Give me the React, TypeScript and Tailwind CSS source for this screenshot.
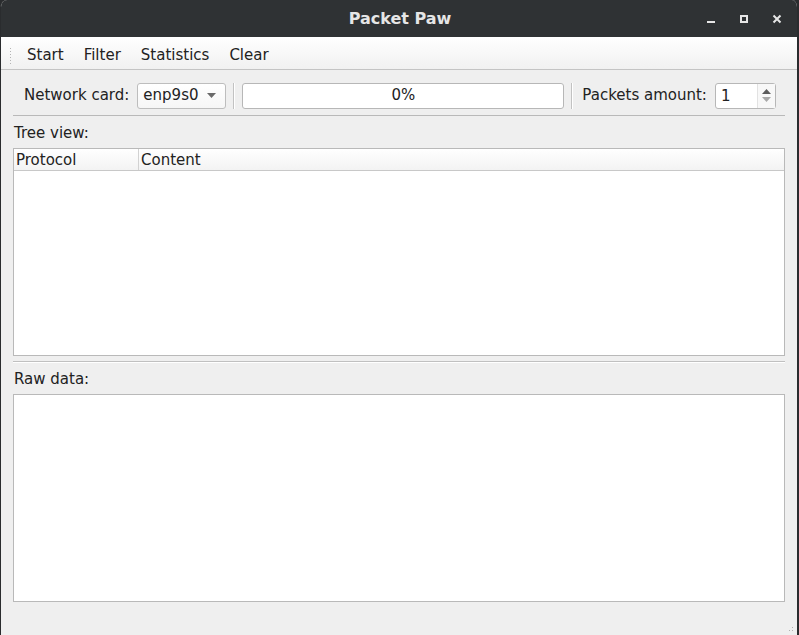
import React from "react";

const Separator = () => (
  <div className="flex shrink-0 h-[26px] mx-[7px]">
    <div className="w-px bg-[#c2c2c2]"></div>
    <div className="w-px bg-white"></div>
  </div>
);

const App = () => {
  return (
    <div className="w-[799px] h-[635px] bg-[#2a2c2e] font-['DejaVu_Sans',sans-serif] text-[15px] text-[#222]">
      <div className="w-full h-full flex flex-col bg-[#efefef] border-l border-r-2 border-[#2a2c2e] rounded-t-[7px] overflow-hidden">
        {/* title bar */}
        <div className="relative h-[37px] flex items-center justify-center bg-[#2f3234] shrink-0">
          <span className="font-bold text-[#e6e6e6] text-[16px] ml-[2px]">Packet Paw</span>
          <div className="absolute right-0 top-0 h-full flex items-center">
            <div className="w-[33px] flex justify-center pt-[6px]">
              <div className="w-[8px] h-[2px] bg-[#e6e6e6]"></div>
            </div>
            <div className="w-[33px] flex justify-center">
              <div className="w-[8px] h-[8px] border-2 border-[#e6e6e6]"></div>
            </div>
            <div className="w-[33px] flex justify-center mr-[4px]">
              <svg width="10" height="10" viewBox="0 0 10 10">
                <path d="M1.5 1.5 L8.5 8.5 M8.5 1.5 L1.5 8.5" stroke="#e6e6e6" strokeWidth="2" />
              </svg>
            </div>
          </div>
        </div>

        {/* menu bar */}
        <div className="h-[33px] shrink-0 flex items-center pt-[5px] bg-gradient-to-b from-white to-[#f1f1f1] border-b border-[#c4c4c4]">
          <div className="ml-[8px] mr-[7px] w-[3px] h-[18px] bg-[radial-gradient(#b4b4b4_0.6px,transparent_0.8px)] bg-[length:3px_3px]"></div>
          <span className="px-[8px]">Start</span>
          <span className="px-[8px] ml-[4px]">Filter</span>
          <span className="px-[8px] ml-[4px]">Statistics</span>
          <span className="px-[8px] ml-[4px]">Clear</span>
        </div>

        {/* main */}
        <div className="flex-1 flex flex-col px-[12px]">
          <div className="h-[46px] shrink-0 flex items-center whitespace-nowrap pl-[11px] pt-[6px] border-b border-[#b9b9b9]">
            <span className="shrink-0 mr-[8px]">Network card:</span>
            <div className="shrink-0 w-[89px] h-[26px] flex items-center justify-between pl-[5px] pr-[9px] rounded-[3px] border border-[#bdbdbd] bg-gradient-to-b from-white to-[#f6f6f6]">
              <span>enp9s0</span>
              <svg width="9" height="5" viewBox="0 0 9 5">
                <path d="M0 0 L9 0 L4.5 5 Z" fill="#6a6a6a" />
              </svg>
            </div>
            <Separator />
            <div className="shrink-0 w-[322px] h-[26px] flex items-center justify-center rounded-[3px] border border-[#b7b7b7] bg-white">
              0%
            </div>
            <Separator />
            <span className="shrink-0 mr-[8px] ml-[2px]">Packets amount:</span>
            <div className="shrink-0 w-[61px] h-[26px] flex rounded-[3px] border border-[#b7b7b7] bg-white">
              <span className="flex-1 pl-[5px] leading-[24px]">1</span>
              <div className="w-[18px] flex flex-col items-center justify-center gap-[3px] border-l border-[#e2e2e2] bg-[#f8f8f8]">
                <svg width="9" height="5" viewBox="0 0 9 5">
                  <path d="M0 5 L9 5 L4.5 0 Z" fill="#5c5c5c" />
                </svg>
                <svg width="9" height="5" viewBox="0 0 9 5">
                  <path d="M0 0 L9 0 L4.5 5 Z" fill="#a8a8a8" />
                </svg>
              </div>
            </div>
          </div>

          <div className="h-[32px] shrink-0 flex items-center pl-[1px] pt-[2px]">Tree view:</div>

          <div className="h-[208px] shrink-0 flex flex-col border border-[#b9b9b9] bg-white">
            <div className="h-[22px] flex border-b border-[#c8c8c8] bg-gradient-to-b from-white to-[#f3f3f3]">
              <div className="w-[125px] pl-[2px] leading-[22px] border-r border-[#d2d2d2]">Protocol</div>
              <div className="pl-[2px] leading-[22px]">Content</div>
            </div>
          </div>

          <div className="h-[5px] shrink-0"></div>
          <div className="h-px shrink-0 bg-[#c0c0c0]"></div>
          <div className="h-px shrink-0 bg-white"></div>

          <div className="h-[31px] shrink-0 flex items-center pl-[1px] pt-[2px]">Raw data:</div>

          <div className="h-[208px] shrink-0 border border-[#b9b9b9] bg-white"></div>

          <div className="flex-1 relative">
            <div className="absolute right-[-10px] bottom-[2px] w-[10px] h-[10px] bg-[radial-gradient(#b0b0b0_0.7px,transparent_0.9px)] bg-[length:3px_3px] [clip-path:polygon(100%_0,100%_100%,0_100%)]"></div>
          </div>
        </div>
      </div>
    </div>
  );
};

export default App;
